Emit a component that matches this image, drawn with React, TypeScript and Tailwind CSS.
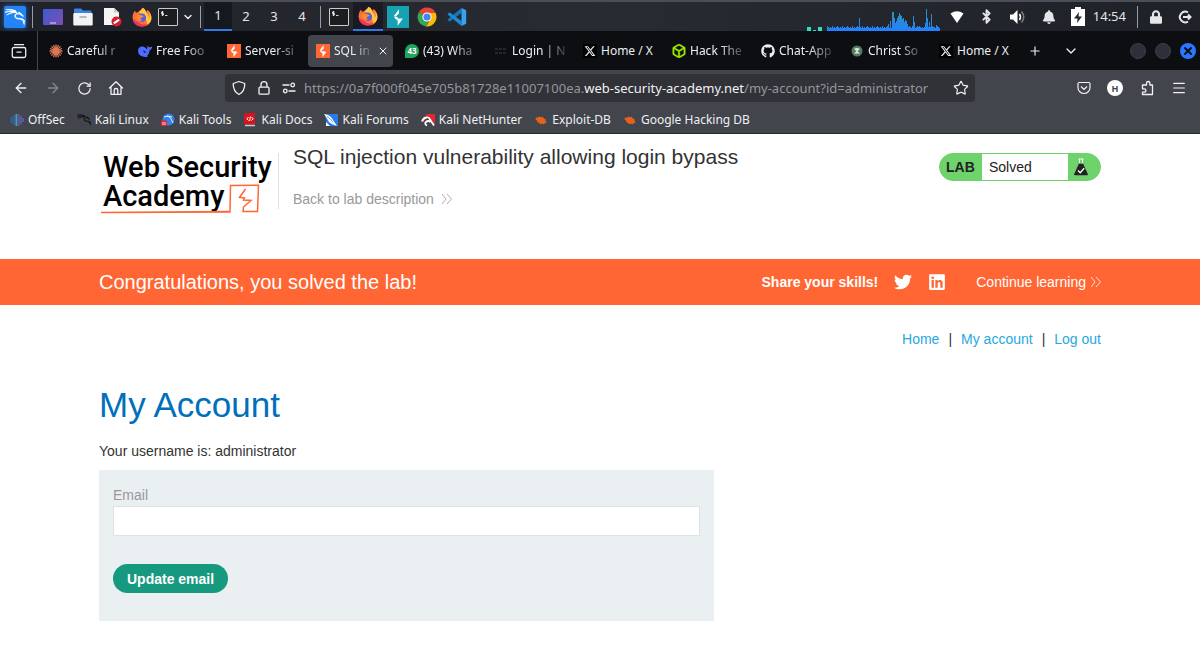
import type { ReactNode } from "react";
import {
  ArrowLeft,
  ArrowRight,
  Bluetooth,
  ChevronDown,
  Menu,
  Plus,
  RotateCw,
  Star,
  X,
} from "lucide-react";
import { FaBell, FaGithub, FaLock, FaTwitter, FaLinkedin } from "react-icons/fa";
import { FaXTwitter } from "react-icons/fa6";
import { SiHackthebox, SiKalilinux } from "react-icons/si";

type IconProps = { className?: string };

const Burp = ({ className = "size-3.5" }: IconProps) => (
  <svg viewBox="0 0 14 14" className={className}>
    <rect width="14" height="14" fill="#ff6633" />
    <path d="M7.600 1 3.600 6.400l3.200.7L6 8.100l4.400-.1L6.400 13V9.200L4 7.600l3.600-2.800z" fill="#fff" />
    <path d="M7.600 4.800 6.800 7.100l3.600.9-4 1.200z" fill="#fff" />
  </svg>
);

const Firefox = ({ className = "size-5" }: IconProps) => (
  <svg viewBox="0 0 20 20" className={className}>
    <path
      d="M10.6.7c2 1 3 2.500 3.400 3.700 1-.2 1.500-1 1.600-1.700C18 5 19.500 7.500 19.400 11c-.2 5-4.300 8.500-9.400 8.500S.6 15.700.6 10.600c0-3 .9-5.400 2.400-7.100l.8 2.200L6.500 5z"
      fill="#ff7139"
    />
    <path d="M10.600.7c3 1.800 3.300 3.700 3.700 5 2.300 1.800 3 4.500 2.300 6.800 2-2.500 1.200-6.500-.6-8.300 2.500 2 3.500 4.500 3.400 7-.1 4-3 6.500-5 7.300 2-3-1-9-7.900-13.500C8.500 4 10.300 2.500 10.600.7z" fill="#ffc83d" />
    <path d="M1 12c0 5 4.500 7.500 9 7.500 3.500 0 6-1.500 7.500-3.500-3 2-8 2.500-11-.8z" fill="#f0355c" />
    <circle cx="9.800" cy="10.800" r="4.300" fill="#5360e6" />
    <path d="M4 9.200c1.500-1.700 3.800-1.700 5.500-.9 1 .5 2.100.6 2 1.200-.3 1-2 .9-2.700 1.700-.6 1 .3 2.400 2 2.500-3 1.500-6.500-.8-6.800-4.500z" fill="#ff8a2b" />
  </svg>
);

const Chrome = ({ className = "size-5" }: IconProps) => (
  <svg viewBox="0 0 20 20" className={className}>
    <path d="M10 10 1.800 5.300A9.500 9.500 0 0 1 18.700 6z" fill="#ea4335" />
    <path d="M10 10 1.800 5.300A9.500 9.500 0 0 0 9 19.400l4-7z" fill="#34a853" />
    <path d="M10 6h8.600A9.500 9.500 0 0 1 9 19.400L13.600 12z" fill="#fbbc04" />
    <circle cx="10" cy="10" r="4.600" fill="#fff" />
    <circle cx="10" cy="10" r="3.600" fill="#4285f4" />
  </svg>
);

const VsCode = () => (
  <svg viewBox="0 0 20 20" className="size-5">
    <path d="M14.500 1v5L3.200 14.300q-.6.400-1.100 0l-1.200-1q-.6-.6 0-1.100z" fill="#1676ba" />
    <path d="M14.500 19v-5L3.200 5.700q-.6-.4-1.100 0l-1.200 1q-.6.600 0 1.100z" fill="#1f8ad2" />
    <path d="m14.500 1 4.200 2q.5.300.5.900v12.200q0 .6-.5.900l-4.200 2z" fill="#35a3f0" />
  </svg>
);

const Terminal = () => (
  <svg viewBox="0 0 20 18" className="h-[18px] w-5">
    <rect x=".5" y=".5" width="19" height="17" rx=".5" fill="#1b1d1f" stroke="#c9cbcd" />
    <path d="M5.500 4H3.500v1.500h2V7h-2M4.500 3v5M7 7.500h2.500" stroke="#fff" strokeWidth=".8" fill="none" />
  </svg>
);

const Folder = () => (
  <svg viewBox="0 0 20 18" className="h-[18px] w-5">
    <path d="M1 1.500Q1 .5 2 .5h6l2 2h7.500q1 0 1 1V8H1z" fill="#3b82e8" />
    <rect x=".3" y="5" width="19.400" height="12.500" rx="1" fill="#f1f2f4" />
    <path d="M6.500 9h7" stroke="#9aa0a8" strokeWidth="1.400" />
  </svg>
);

const TextFile = () => (
  <svg viewBox="0 0 19 20" className="h-5 w-[19px]">
    <path d="M1 1h10l5 4.500V18H1z" fill="#f4f4f5" />
    <path d="M11 1v4.500h5z" fill="#c9cbd0" />
    <circle cx="13.500" cy="14.500" r="5" fill="#d3202e" />
    <path d="m10.800 16.300 5.400-3.600" stroke="#fff" strokeWidth="2" />
  </svg>
);

const Desktop = () => (
  <svg viewBox="0 0 20 16" className="h-4 w-5">
    <defs>
      <linearGradient id="desk" x1="0" y1="0" x2="1" y2=".6">
        <stop stopColor="#3e5bd0" />
        <stop offset="1" stopColor="#7350b4" />
      </linearGradient>
    </defs>
    <rect width="20" height="16" rx="1" fill="url(#desk)" />
    <path d="M7 14h6" stroke="#d7dcff" />
  </svg>
);

const Starburst = () => (
  <svg viewBox="-7 -7 14 14" className="size-3.5" stroke="#d97757" strokeWidth="1.300">
    <path d="M0-6.500v13M-6.500 0h13M-4.600-4.600l9.200 9.200M-4.600 4.600l9.200-9.200M-2.500-6l5 12M2.500-6l-5 12M-6-2.500l12 5M-6 2.500l12-5" />
  </svg>
);

const Whale = () => (
  <svg viewBox="0 0 16 14" className="h-3.5 w-4">
    <path
      d="M1 7C1 3.500 3.500 2 6 2.600c2 .5 3 1.800 4 3C10.500 4.700 10 3 10.600 1.800c.5.900 1.100 1.500 2 1.500 1 0 1.700-.4 2.600-.8-.1 2-1 3.200-2.700 3.900-.2 2.400-1 4.200-2.600 5.400l1 .9C6.100 13.700 1.300 11.800 1 7z"
      fill="#4d6bfe"
    />
    <path d="M6 6.500c1.500 0 2.500 1 3 2.500C7.500 9 6.500 8 6 6.500z" fill="#0d0e12" />
  </svg>
);

const Flask = () => (
  <svg viewBox="0 0 16 18" className="h-[18px] w-4">
    <path d="M5.500 1h5M6.500 1v4.500h3V1" stroke="#f4fff1" fill="none" />
    <path d="M6 5.500h4L14.800 16q.5 1.300-1 1.300H2.200q-1.500 0-1-1.300z" fill="#222" />
    <path d="m5 12.500 2.200 2.200 4-4.500" stroke="#fff" strokeWidth="1.300" fill="none" />
  </svg>
);

const DoubleChevron = ({ className = "h-3 w-2.5" }: IconProps) => (
  <svg viewBox="0 0 10 12" className={className} fill="none" stroke="currentColor" strokeWidth=".8">
    <path d="m0 1 4 5-4 5M5 1l4.500 5L5 11" />
  </svg>
);

// browser toolbar glyphs
const Glyph = ({ d }: { d: string }) => (
  <svg
    viewBox="0 0 16 16"
    className="size-4"
    fill="none"
    stroke="currentColor"
    strokeWidth="1.300"
    strokeLinecap="round"
    strokeLinejoin="round"
  >
    <path d={d} />
  </svg>
);

const overviewPath = "M3.500 1.700h9M3 4.500h10q1.700 0 1.700 1.700v6.600q0 1.700-1.700 1.700H3q-1.700 0-1.700-1.700V6.200Q1.300 4.500 3 4.500zM6 9.200h4";
const homePath = "M1.500 8 8 1.800 14.500 8M3 6.700v7.600h10V6.700M6.200 14v-3.700a1.800 1.800 0 0 1 3.600 0V14";
const shieldPath = "M8 1.500 13.800 3.500C13.800 8.500 12 12.500 8 14.500 4 12.500 2.200 8.500 2.200 3.500z";
const padlockPath = "M4 7.200h8q1 0 1 1v5q0 1-1 1H4q-1 0-1-1v-5q0-1 1-1zM5 7V4.700a3 3 0 0 1 6 0V7";
const puzzlePath =
  "M3.500 5h4V3.200a1.700 1.700 0 0 1 3.400 0V5h2.600v9.500h-10v-2.300h1.700a1.700 1.700 0 0 0 0-3.400H3.500z";

const Permissions = () => (
  <svg viewBox="0 0 14 12" className="h-3 w-3.5" fill="none" stroke="currentColor" strokeWidth="1.300">
    <path d="M.5 3h7M6.500 9h7" />
    <circle cx="10.700" cy="3" r="1.800" />
    <circle cx="3.300" cy="9" r="1.800" />
  </svg>
);

const Leaf = () => (
  <svg viewBox="0 0 14 12" className="h-3 w-3.5">
    <path d="M2 3.500 4 3.800 5 2.500l2 .8 1.500-.5L10 4.500l1.800 1-.3 1.700 1.500 1.500-2 .3-1 1.300-2-.5-1.500.4L5 8.700l-2-.5.3-1.500L1.500 5.500z" fill="#e8611c" />
  </svg>
);

const NetworkDots = () => (
  <svg viewBox="0 0 16 4" className="h-1 w-4" fill="#2de0c0">
    <path d="M0 0h4v4H0zM6 3h3v1H6zM11 -1h4v5h-4z" />
  </svg>
);

const peaks: Record<number, number> = {
  2: 3, 32: 13, 61: 7, 63: 10, 65: 19, 66: 19, 67: 13, 68: 8, 69: 10, 70: 13, 71: 15, 72: 18, 73: 16,
  74: 15, 75: 12, 76: 13, 77: 9, 78: 11, 79: 10, 80: 7, 82: 5, 86: 15, 87: 9, 92: 5, 95: 4, 98: 8,
  99: 22, 100: 13, 102: 9, 104: 17, 106: 4, 109: 6,
};
const levels = Array.from({ length: 113 }, (_, i) => peaks[i] ?? 3 + ((i * 7) % 5 === 0 ? 2 : i % 2));

const CpuGraph = () => (
  <svg viewBox="0 0 113 24" className="h-6 w-[113px]">
    <defs>
      <linearGradient id="cpu" gradientUnits="userSpaceOnUse" x1="0" y1="2" x2="0" y2="24">
        <stop stopColor="#2a96b0" />
        <stop offset="1" stopColor="#2580ff" />
      </linearGradient>
    </defs>
    {levels.map((level, i) => (
      <rect key={i} x={i} y={24 - level} width="1" height={level} fill="url(#cpu)" />
    ))}
  </svg>
);

const Separator = () => <span className="h-[22px] w-px bg-[#9a9ca0]" />;

const Taskbar = () => (
  <header className="flex h-[31px] items-end justify-between border-t-2 border-[#4b4e56] bg-linear-to-r from-[#20222b] via-[#292b32] to-[#1f2129] text-[#e4e6e8]">
    <div className="flex h-full items-center">
      <button aria-label="Applications" className="ml-1 grid size-[22px] place-items-center rounded-xs bg-[#2385f5] text-white shadow-[0_0_5px_#1a65c8]">
        <SiKalilinux className="size-5 stroke-white stroke-1" />
      </button>
      <div className="ml-1.5 flex items-center gap-2.5">
        <Separator />
        <button aria-label="Show desktop"><Desktop /></button>
        <button aria-label="Files"><Folder /></button>
        <button aria-label="Text editor"><TextFile /></button>
        <button aria-label="Firefox"><Firefox /></button>
        <span className="flex items-center gap-1">
          <button aria-label="Terminal" className="-ml-1"><Terminal /></button>
          <button aria-label="More terminals"><ChevronDown className="size-3" strokeWidth={3} /></button>
        </span>
      </div>
      <nav aria-label="Workspaces" className="ml-1.5 flex h-full items-center">
        <Separator />
        <button className="ml-[3px] h-full w-7 border-b-2 border-[#3179e8] bg-[#161820]">1</button>
        <button className="h-full w-7">2</button>
        <button className="h-full w-7">3</button>
        <button className="h-full w-7">4</button>
      </nav>
      <div className="ml-1 flex h-full items-center">
        <Separator />
        <button aria-label="Terminal window" className="ml-2"><Terminal /></button>
        <button aria-label="Firefox window" className="ml-1 flex h-full w-[30px] items-center justify-center border-b-2 border-[#3179e8] bg-[#1a1a24]">
          <Firefox />
        </button>
        <button aria-label="Burp Suite window" className="ml-1 grid size-[22px] place-items-center bg-[#17a2b3]">
          <svg viewBox="0 0 14 14" className="size-[22px]">
            <path d="M7.600 2 4.300 6.600l2.800.5-.7.9 3.700-.1L6.800 12.500V9.300L4.600 7.500l3-2.800z" fill="#fff" />
          </svg>
        </button>
        <button aria-label="Chrome window" className="ml-2"><Chrome /></button>
        <button aria-label="Code window" className="ml-2.5"><VsCode /></button>
      </div>
    </div>
    <div className="flex h-full items-end">
      <NetworkDots />
      <span className="ml-1 flex"><CpuGraph /></span>
      <div className="ml-2.5 flex h-full items-center">
        <svg viewBox="0 0 14 12" className="h-3 w-3.5" fill="#fff"><path d="M.5 2.500Q7-2 13.500 2.500L7 12z" /></svg>
        <Bluetooth className="ml-[15px] size-[15px]" strokeWidth={3} />
        <svg viewBox="0 0 16 14" className="ml-4 h-3.5 w-4" fill="none" strokeWidth="1.500">
          <path d="M0 4.500h3L7.500 0v14L3 9.500H0z" fill="#fff" />
          <path d="M9.500 4q2 3 0 6" stroke="#fff" />
          <path d="M11.500 1.500q4.500 5.500 0 11" stroke="#7b7e84" />
        </svg>
        <FaBell className="ml-4 size-3.5" />
        <svg viewBox="0 0 14 19" className="ml-[15px] h-[19px] w-3.5">
          <path d="M4 0h6v2h4v17H0V2h4z" fill="#fff" />
          <path d="m8 5-5 6.500h3.500L6 16l5-6.500H7.500z" fill="#24262e" />
        </svg>
        <time className="ml-2 text-[13px]">14:54</time>
        <span className="ml-[11px] flex"><Separator /></span>
        <FaLock className="ml-3 h-3.5 w-3" />
        <svg viewBox="0 0 14 14" className="mr-2 ml-4 size-3.5" fill="none" stroke="currentColor" strokeWidth="2">
          <path d="M10 2.500A5.300 5.300 0 1 0 10 11.500M5 7h7M10 4.500 12.500 7 10 9.500" />
        </svg>
      </div>
    </div>
  </header>
);

type TabProps = { title: string; icon: ReactNode; active?: boolean };

const Tab = ({ title, icon, active = false }: TabProps) => (
  <div
    className={`${
      active ? "bg-[#42454c]" : ""
    } flex h-8 w-[85px] min-w-0 items-center gap-[3px] rounded-sm pl-[7px]`}
  >
    <span className="grid size-4 shrink-0 place-items-center">{icon}</span>
    <a
      href="#"
      className={`${active ? "w-10" : "flex-1"} ${
        title.startsWith("Home") ? "" : "mask-r-from-50% mask-r-to-100%"
      } whitespace-nowrap`}
    >
      {title}
    </a>
    {active && (
      <button aria-label="Close tab">
        <X className="size-3" />
      </button>
    )}
  </div>
);

const XBadge = () => (
  <span className="grid size-3.5 place-items-center bg-black">
    <FaXTwitter className="size-3" />
  </span>
);

const TabStrip = () => (
  <div className="flex h-[39px] items-center justify-between bg-[#0d0e12] text-xs text-[#eceef0]">
    <div className="flex h-full min-w-0 items-center">
      <button aria-label="Recent browsing" className="grid h-full w-[37px] place-items-center">
        <Glyph d={overviewPath} />
      </button>
      <div className="flex h-full min-w-0 items-center gap-1 border-l border-[#45474c] pl-[3px]">
        <Tab title="Careful r" icon={<Starburst />} />
        <Tab title="Free Foo" icon={<Whale />} />
        <Tab title="Server-si" icon={<Burp />} />
        <Tab title="SQL in" icon={<Burp />} active />
        <Tab
          title="(43) Wha"
          icon={
            <span className="grid size-3.5 place-items-center rounded-full rounded-bl-none bg-[#22a55b] text-[8px] leading-none font-bold text-white">
              43
            </span>
          }
        />
        <Tab
          title="Login | N"
          icon={
            <svg viewBox="0 0 14 14" className="size-3.5" stroke="#24262b" strokeWidth="2" strokeDasharray="3 1">
              <path d="M1 5h12M1 9h12" />
            </svg>
          }
        />
        <Tab title="Home / X" icon={<XBadge />} />
        <Tab title="Hack The" icon={<SiHackthebox className="size-3.5 stroke-[#9fef00] stroke-1 text-[#9fef00]" />} />
        <Tab title="Chat-App" icon={<FaGithub className="size-3.5" />} />
        <Tab
          title="Christ So"
          icon={
            <svg viewBox="0 0 12 12" className="size-3">
              <circle cx="6" cy="6" r="5.500" fill="#527c62" />
              <path d="M3 4q3-2 6 0L6.500 6 9 8.500H3L5.500 6z" fill="#dfe8e1" />
            </svg>
          }
        />
        <Tab title="Home / X" icon={<XBadge />} />
      </div>
      <button aria-label="New tab" className="ml-3"><Plus className="size-3.5" /></button>
      <button aria-label="List all tabs" className="ml-[21px]"><ChevronDown className="size-4" /></button>
    </div>
    <div className="mr-1 flex gap-[9px]">
      <button aria-label="Minimise" className="size-4 rounded-full border border-[#3d404a] bg-[#2d303a]" />
      <button aria-label="Maximise" className="size-4 rounded-full border border-[#3d404a] bg-[#2d303a]" />
      <button aria-label="Close" className="grid size-4 place-items-center rounded-full bg-[#2777ff] text-[#0d0e12]">
        <X className="size-3" strokeWidth={4} />
      </button>
    </div>
  </div>
);

const NavBar = () => (
  <div className="flex h-9 items-center text-[#f0f1f3]">
    <div className="flex flex-1 gap-4 pl-[13px]">
      <button aria-label="Back"><ArrowLeft className="size-4" /></button>
      <button aria-label="Forward" className="text-[#85878d]"><ArrowRight className="size-4" /></button>
      <button aria-label="Reload"><RotateCw className="size-[15px]" /></button>
      <button aria-label="Home page"><Glyph d={homePath} /></button>
    </div>
    <div className="flex h-7 w-[750px] items-center rounded-sm bg-[#303238] px-1.5">
      <Glyph d={shieldPath} />
      <span className="ml-[9px]"><Glyph d={padlockPath} /></span>
      <span className="ml-2.5"><Permissions /></span>
      <a href="#" aria-label="Address" className="ml-2 flex-1 whitespace-nowrap text-[#94969b]">
        https://0a7f000f045e705b81728e11007100ea.<span className="text-[#f0f1f3]">web-security-academy.net</span>
        /my-account?id=administrator
      </a>
      <button aria-label="Bookmark this page"><Star className="size-4" strokeWidth={1.75} /></button>
    </div>
    <div className="flex flex-1 items-center justify-end gap-4 pr-[13px]">
      <button aria-label="Save to Pocket">
        <svg viewBox="0 0 14 14" className="size-3.5" fill="none" stroke="currentColor" strokeWidth="1.200">
          <path d="M2.200 1.500h9.600q1.200 0 1.200 1.200V6.500a6 6 0 0 1-12 0V2.700Q1 1.500 2.200 1.500zM4 5.500l3 3 3-3" />
        </svg>
      </button>
      <button aria-label="Account" className="grid size-4 place-items-center rounded-full bg-white text-[9px] leading-none font-bold text-[#42454c]">
        H
      </button>
      <button aria-label="Extensions"><Glyph d={puzzlePath} /></button>
      <button aria-label="Menu"><Menu className="size-4" strokeWidth={1.75} /></button>
    </div>
  </div>
);

const Bookmark = ({ title, icon }: { title: string; icon: ReactNode }) => (
  <a href="#" className="flex items-center gap-1 whitespace-nowrap">
    <span className="grid size-3.5 place-items-center">{icon}</span>
    {title}
  </a>
);

const Bookmarks = () => (
  <nav aria-label="Bookmarks" className="flex h-[27px] items-center gap-3 pl-2.5 text-xs text-[#eff0f2]">
    <Bookmark
      title="OffSec"
      icon={
        <svg viewBox="0 0 14 14" className="size-3.5" fill="none" strokeWidth="1.800">
          <path d="M1.500 4v6M4 2v10" stroke="#3464a4" />
          <path d="M6.400 1v12" stroke="#3aa9b4" />
          <path d="M8.800 1v12M11 3v8M13 5v4" stroke="#6656a2" />
        </svg>
      }
    />
    <Bookmark title="Kali Linux" icon={<SiKalilinux className="size-3.5 stroke-[#131519] stroke-1 text-[#131519]" />} />
    <Bookmark
      title="Kali Tools"
      icon={
        <svg viewBox="0 0 14 14" className="size-3.5">
          <circle cx="7.500" cy="6.500" r="6" fill="#3381ed" />
          <path d="M3 4q5-2 7 2l2 4M6 3l5 1" stroke="#e5efff" fill="none" />
          <path d="M0 7.500h6V13H0z" fill="#db2937" />
          <path d="M2 9v3M4 9v3" stroke="#fff" strokeWidth=".8" />
        </svg>
      }
    />
    <Bookmark
      title="Kali Docs"
      icon={
        <svg viewBox="0 0 12 14" className="h-3.5 w-3">
          <path d="M0 1.500Q0 0 1.500 0H11v11.500H0z" fill="#d5141d" />
          <path d="M1 12.500h10" stroke="#c9c9cc" strokeWidth="1.500" />
          <path d="M4.500 4 2.800 5.800l1.700 1.700M7.500 4l1.700 1.800-1.700 1.700M6.400 3.500l-.8 4.500" stroke="#fff" fill="none" />
        </svg>
      }
    />
    <Bookmark
      title="Kali Forums"
      icon={
        <svg viewBox="0 0 14 14" className="size-3.5">
          <path d="M1 1h13v12H3z" fill="#287be8" />
          <path d="M0 1q7 1 9 6l4 6Q7 11 5 9 3 5 0 1zM2 9l4 4H2z" fill="#fff" />
          <path d="M3 3.500q4 2 6 6" stroke="#287be8" strokeWidth=".7" fill="none" />
        </svg>
      }
    />
    <Bookmark
      title="Kali NetHunter"
      icon={
        <svg viewBox="0 0 14 14" className="size-3.5">
          <path d="M4 1h10v10z" fill="#e62531" />
          <path d="M.5 7Q2 3.500 5.500 3.500L3 9z" fill="#e62531" />
          <path d="M1 8.500C2.500 4 8 3 9 6.500l4 6M9.500 9Q7 7 5 9t1 3.500" stroke="#fff" strokeWidth="1.800" fill="none" />
        </svg>
      }
    />
    <Bookmark title="Exploit-DB" icon={<Leaf />} />
    <Bookmark title="Google Hacking DB" icon={<Leaf />} />
  </nav>
);

const Logo = () => (
  <a
    href="#"
    className="relative block h-[68px] w-[179px] pl-1 font-['Roboto',sans-serif] text-[29px] leading-[29px] font-medium whitespace-nowrap text-black"
  >
    <span className="flex gap-1.5">
      <span>Web</span>
      <span>Security</span>
    </span>
    <span className="block">Academy</span>
    <svg viewBox="0 0 162 32" className="absolute top-[31px] left-0 h-8 w-[162px]" fill="none" stroke="#ff6633" strokeWidth="1.500">
      <path d="M2 28.500 131 28l.5-26.500 28-.3-1 26.300h-14.500l.5-4.500 7.500-6.500-7.500-.5 1-2-5-.5 6-8.500M2 28.500l128-1" />
    </svg>
  </a>
);

const LabStatus = () => (
  <div className="flex h-7 w-[162px] items-center overflow-hidden rounded-full border border-[#6fd36b] bg-[#6fd36b] text-[#222]">
    <span className="w-[42px] pl-1.5 font-bold">LAB</span>
    <span className="flex h-full flex-1 items-center bg-white pl-[7px]">Solved</span>
    <span className="flex w-8 pl-[5px]"><Flask /></span>
  </div>
);

const App = () => (
  <div className="min-h-screen bg-white font-['Liberation_Sans',Arial,sans-serif] text-sm text-[#333]">
    <div className="font-['Noto_Sans',sans-serif] text-[13px]">
      <Taskbar />
      <TabStrip />
      <div className="border-b border-[#25272b] bg-[#42454c]">
        <NavBar />
        <Bookmarks />
      </div>
    </div>

    <div className="mx-auto flex h-[125px] max-w-[1002px] items-start pt-[19px]">
      <Logo />
      <div className="flex h-14 flex-1 flex-col justify-between border-l border-[#e2e2e2] pl-3.5">
        <h2 className="-mt-2 text-[21px] leading-6">SQL injection vulnerability allowing login bypass</h2>
        <a href="#" className="flex items-center gap-2 leading-5 text-[#999]">
          Back to lab description <DoubleChevron />
        </a>
      </div>
      <LabStatus />
    </div>

    <section className="bg-[#ff6633] text-white">
      <div className="mx-auto flex h-[46px] max-w-[1002px] items-center">
        <p className="flex-1 text-xl">Congratulations, you solved the lab!</p>
        <span className="font-bold">Share your skills!</span>
        <a href="#" aria-label="Share on Twitter" className="ml-4"><FaTwitter className="size-[18px]" /></a>
        <a href="#" aria-label="Share on LinkedIn" className="ml-4"><FaLinkedin className="size-[18px]" /></a>
        <a href="#" className="ml-[30px] flex items-center gap-[5px]">
          Continue learning <DoubleChevron />
        </a>
      </div>
    </section>

    <main className="mx-auto max-w-[1002px] pt-6">
      <nav className="flex justify-end gap-[9px] leading-5">
        <a href="#" className="text-[#29a7df]">Home</a>
        <span>|</span>
        <a href="#" className="text-[#29a7df]">My account</a>
        <span>|</span>
        <a href="#" className="text-[#29a7df]">Log out</a>
      </nav>
      <h1 className="mt-9 text-[35px] leading-10 text-[#0070ba]">My Account</h1>
      <p className="mt-4 leading-5">Your username is: administrator</p>
      <form className="mt-[9px] max-w-[615px] bg-[#eaeff2] px-3.5 pt-[15px] pb-7" onSubmit={(e) => e.preventDefault()}>
        <label htmlFor="email" className="block leading-5 text-[#999]">Email</label>
        <input id="email" type="email" className="mt-px block h-[30px] w-full border border-[#dde2e5] bg-white px-2" />
        <button className="mt-7 h-[29px] rounded-full bg-[#17997f] px-3.5 font-bold text-white">Update email</button>
      </form>
    </main>
  </div>
);

export default App;
